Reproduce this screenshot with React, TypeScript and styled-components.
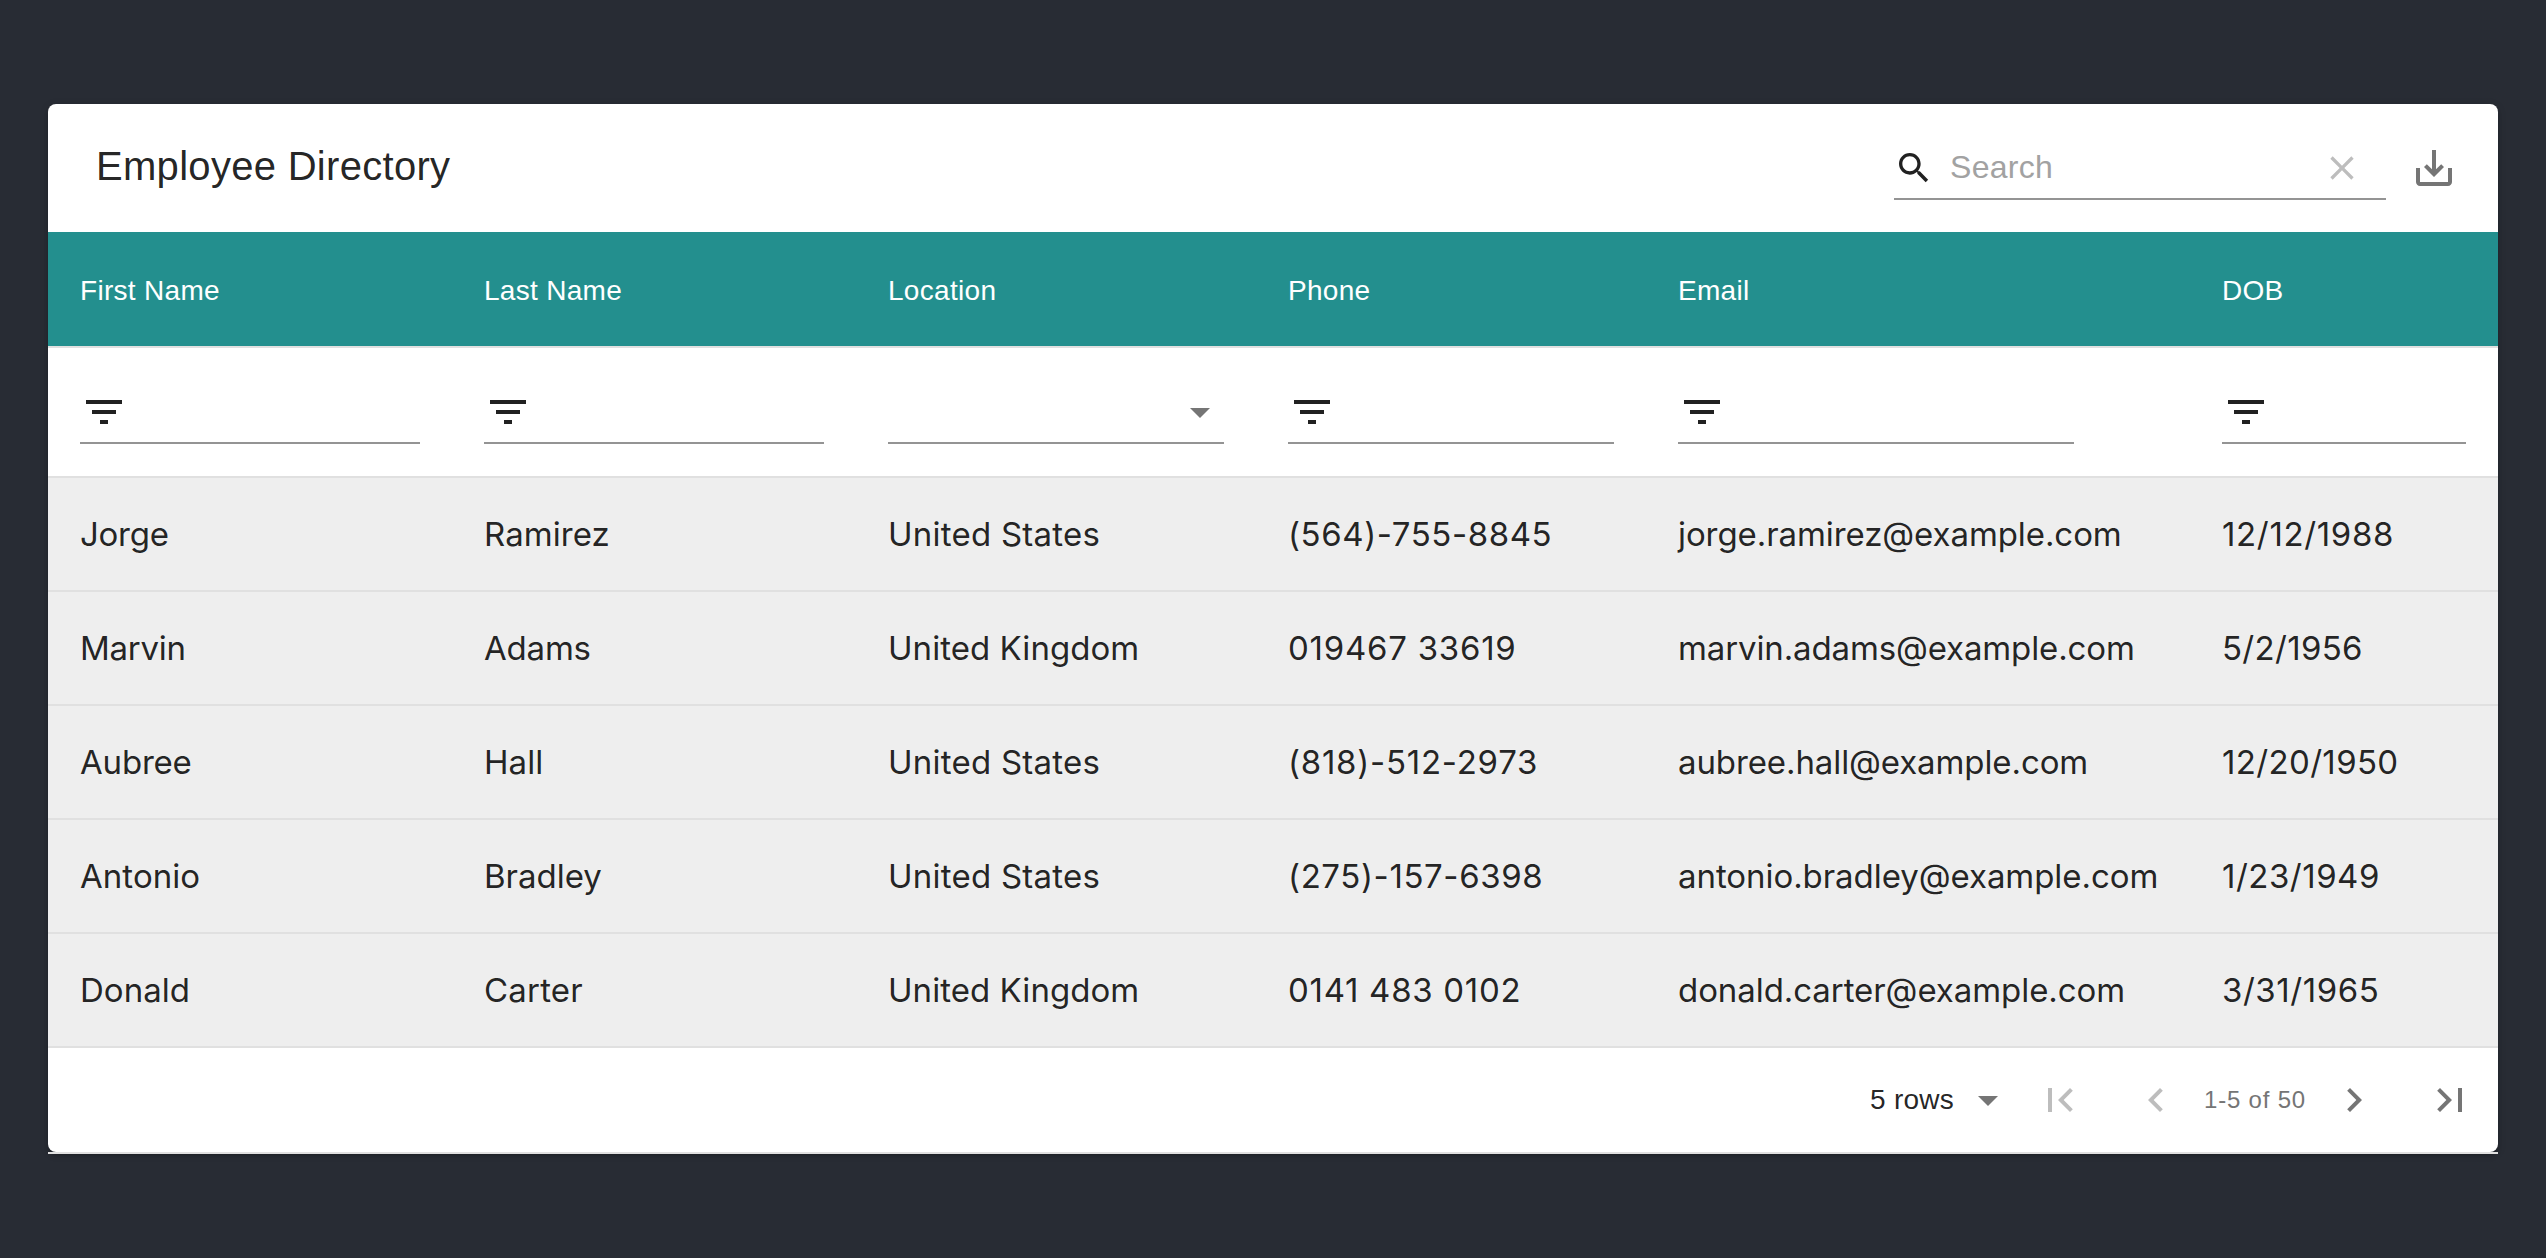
import React from "react";
import styled, { createGlobalStyle } from "styled-components";

const GlobalStyle = createGlobalStyle`
  * { box-sizing: border-box; }
  body {
    margin: 0;
    background: #282c34;
    color: rgba(0, 0, 0, 0.87);
    font-family: "Liberation Sans", Arial, sans-serif;
  }
`;

const Page = styled.main`
  height: 1258px;
  padding: 104px 48px;
`;

const Card = styled.section`
  height: 1048px;
  display: flex;
  flex-direction: column;
  background: #fff;
  border-radius: 8px;
  box-shadow: 0 6px 2px -4px rgba(0, 0, 0, 0.2), 0 4px 4px rgba(0, 0, 0, 0.14),
    0 2px 10px rgba(0, 0, 0, 0.12);
`;

const Toolbar = styled.header`
  height: 128px;
  flex: none;
  display: flex;
  align-items: center;
  justify-content: space-between;
  padding: 0 16px 0 48px;
`;

const Title = styled.h1`
  margin: 0 0 4px;
  font-size: 40px;
  font-weight: 400;
  line-height: 64px;
  letter-spacing: 0.3px;
`;

const Actions = styled.div`
  display: flex;
  align-items: center;
`;

const SearchField = styled.label`
  width: 492px;
  height: 64px;
  display: flex;
  align-items: center;
  gap: 16px;
  padding-top: 2px;
  border-bottom: 2px solid #949494;
`;

const SearchInput = styled.input`
  flex: 1;
  min-width: 0;
  height: 60px;
  padding: 0 0 2px;
  border: 0;
  outline: 0;
  background: none;
  color: inherit;
  font: 32px "Liberation Sans", Arial, sans-serif;
  letter-spacing: 0.3px;
  &::placeholder {
    color: #a2a2a2;
    opacity: 1;
  }
`;

const IconButton = styled.button<{ $muted?: boolean }>`
  display: flex;
  flex: none;
  padding: 24px;
  border: 0;
  background: none;
  color: ${(p) => (p.$muted ? "#bdbdbd" : "#757575")};
`;

const Svg = styled.svg<{ $size: number; $color?: string }>`
  display: block;
  flex: none;
  width: ${(p) => p.$size}px;
  height: ${(p) => p.$size}px;
  fill: ${(p) => p.$color ?? "currentColor"};
`;

const Row = styled.div<{ $shade?: string; $height: number }>`
  display: grid;
  grid-template-columns: 404px 404px 400px 390px 544px 308px;
  flex: none;
  align-items: center;
  height: ${(p) => p.$height}px;
  border-bottom: 2px solid #e0e0e0;
  background: ${(p) => p.$shade ?? "transparent"};
`;

const HeadCell = styled.div`
  padding: 3px 32px 0;
  color: #fff;
  font-size: 28px;
  line-height: 42px;
  letter-spacing: 0.3px;
`;

const FilterCell = styled.div`
  padding: 0 32px;
`;

const FilterField = styled.div<{ $width?: number; $end?: boolean }>`
  width: ${(p) => (p.$width ? `${p.$width}px` : "auto")};
  height: 64px;
  display: flex;
  align-items: flex-start;
  justify-content: ${(p) => (p.$end ? "flex-end" : "flex-start")};
  padding-top: 8px;
  border-bottom: 2px solid #949494;
`;

const Cell = styled.div<{ $track: number }>`
  padding: 0 32px;
  white-space: nowrap;
  font-family: Inter, sans-serif;
  font-size: 33px;
  line-height: 48px;
  letter-spacing: ${(p) => p.$track}px;
`;

const Footer = styled.footer`
  height: 106px;
  flex: none;
  display: flex;
  align-items: center;
  justify-content: flex-end;
  margin-bottom: -2px;
  border-bottom: 2px solid #e0e0e0;
`;

const RowsSelect = styled.div`
  display: flex;
  align-items: center;
  gap: 10px;
  padding-bottom: 0;
  font-size: 28px;
  letter-spacing: 0.25px;
`;

const PageRange = styled.span`
  width: 102px;
  white-space: nowrap;
  color: #757575;
  font-size: 24px;
  letter-spacing: 0.8px;
`;

const ICONS = {
  search:
    "M15.5 14h-.79l-.28-.27C15.41 12.59 16 11.11 16 9.5 16 5.91 13.09 3 9.5 3S3 5.91 3 9.5 5.91 16 9.5 16c1.61 0 3.09-.59 4.23-1.57l.27.28v.79l5 4.99L20.49 19l-4.99-5zm-6 0C7.01 14 5 11.99 5 9.5S7.01 5 9.5 5 14 7.01 14 9.5 11.99 14 9.5 14z",
  clear:
    "M19 6.41L17.59 5 12 10.59 6.41 5 5 6.41 10.59 12 5 17.59 6.41 19 12 13.41 17.59 19 19 17.59 13.41 12z",
  save: "M19 12v7H5v-7H3v7c0 1.1.9 2 2 2h14c1.1 0 2-.9 2-2v-7h-2zm-6 .67l2.59-2.58L17 11.5l-5 5-5-5 1.41-1.41L11 12.67V3h2z",
  filter: "M10 18h4v-2h-4v2zM3 6v2h18V6H3zm3 7h12v-2H6v2z",
  dropdown: "M7 10l5 5 5-5z",
  first: "M18.41 16.59L13.82 12l4.59-4.59L17 6l-6 6 6 6zM6 6h2v12H6z",
  previous: "M15.41 7.41L14 6l-6 6 6 6 1.41-1.41L10.83 12z",
  next: "M10 6L8.59 7.41 13.17 12l-4.58 4.59L10 18l6-6z",
  last: "M5.59 7.41L10.18 12l-4.59 4.59L7 18l6-6-6-6zM16 6h2v12h-2z",
};

function Icon({ name, size = 48, color }: { name: keyof typeof ICONS; size?: number; color?: string }) {
  return (
    <Svg viewBox="0 0 24 24" $size={size} $color={color} aria-hidden="true">
      <path d={ICONS[name]} />
    </Svg>
  );
}

const INK = "#212121";

const COLUMNS: { title: string; select?: boolean; width?: number }[] = [
  { title: "First Name" },
  { title: "Last Name" },
  { title: "Location", select: true },
  { title: "Phone" },
  { title: "Email", width: 396 },
  { title: "DOB" },
];

// Each value is paired with its letter spacing in pixels.
type Value = [text: string, track: number];

const US: Value = ["United States", 0.24];
const UK: Value = ["United Kingdom", 0.05];

const EMPLOYEES: Value[][] = [
  [["Jorge", -0.25], ["Ramirez", 0.05], US, ["(564)-755-8845", 0.57], ["jorge.ramirez@example.com", -0.08], ["12/12/1988", 0.65]],
  [["Marvin", -0.25], ["Adams", -0.2], UK, ["019467 33619", 0.75], ["marvin.adams@example.com", -0.13], ["5/2/1956", 0.3]],
  [["Aubree", -0.2], ["Hall", 0.1], US, ["(818)-512-2973", 0.75], ["aubree.hall@example.com", -0.1], ["12/20/1950", 0.35]],
  [["Antonio", 0.05], ["Bradley", 0], US, ["(275)-157-6398", 0.6], ["antonio.bradley@example.com", -0.06], ["1/23/1949", 0.5]],
  [["Donald", 0.05], ["Carter", 0.2], UK, ["0141 483 0102", 0.7], ["donald.carter@example.com", -0.07], ["3/31/1965", 0.55]],
];

export default function App() {
  return (
    <>
      <GlobalStyle />
      <Page>
        <Card>
          <Toolbar>
            <Title>Employee Directory</Title>
            <Actions>
              <SearchField>
                <Icon name="search" size={40} color={INK} />
                <SearchInput placeholder="Search" />
                <IconButton $muted>
                  <Icon name="clear" size={40} />
                </IconButton>
              </SearchField>
              <IconButton>
                <Icon name="save" />
              </IconButton>
            </Actions>
          </Toolbar>
          <Row $height={116} $shade="#238f8e">
            {COLUMNS.map((c) => (
              <HeadCell key={c.title}>{c.title}</HeadCell>
            ))}
          </Row>
          <Row $height={130}>
            {COLUMNS.map((c) => (
              <FilterCell key={c.title}>
                <FilterField $width={c.width} $end={c.select}>
                  {c.select ? <Icon name="dropdown" color="#757575" /> : <Icon name="filter" color={INK} />}
                </FilterField>
              </FilterCell>
            ))}
          </Row>
          {EMPLOYEES.map((employee) => (
            <Row key={employee[4][0]} $height={114} $shade="#eee">
              {employee.map(([text, track], i) => (
                <Cell key={i} $track={track}>
                  {text}
                </Cell>
              ))}
            </Row>
          ))}
          <Footer>
            <RowsSelect>
              <span>5 rows</span>
              <Icon name="dropdown" color="#757575" />
            </RowsSelect>
            <IconButton $muted>
              <Icon name="first" />
            </IconButton>
            <IconButton $muted>
              <Icon name="previous" />
            </IconButton>
            <PageRange>1-5 of 50</PageRange>
            <IconButton>
              <Icon name="next" />
            </IconButton>
            <IconButton>
              <Icon name="last" />
            </IconButton>
          </Footer>
        </Card>
      </Page>
    </>
  );
}
